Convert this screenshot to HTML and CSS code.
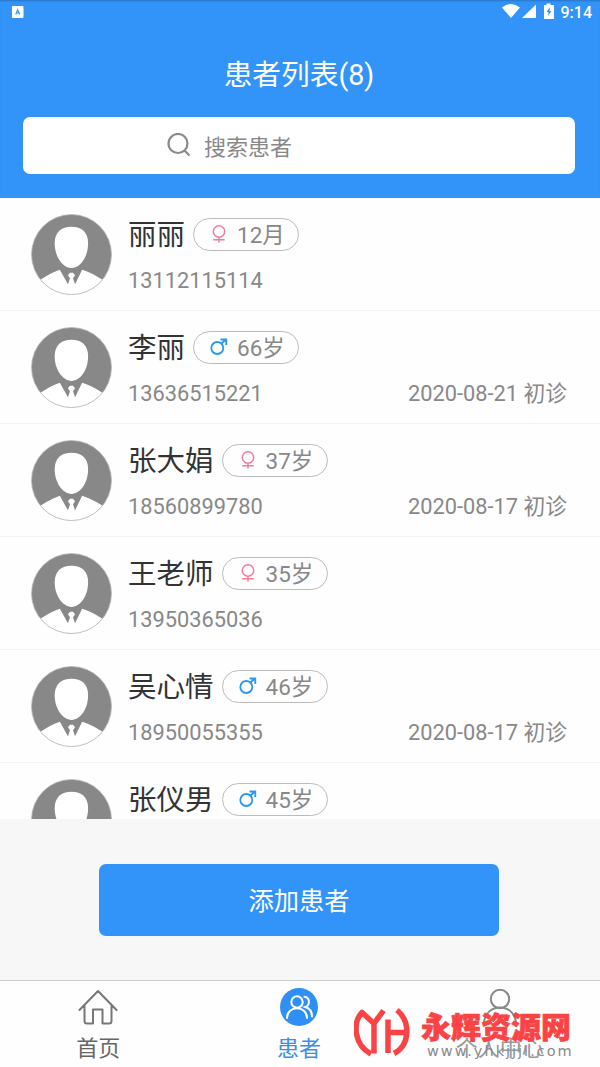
FILE: index.html
```
<!DOCTYPE html>
<html lang="zh-CN">
	<head>
		<title>患者列表</title>
		<meta charset="utf-8">
		<link rel="stylesheet" href="styles.css">
	</head>

	<body>

	<!-- shared icons -->
	<svg class="symbols">
		<symbol id="avatar" viewBox="0 0 80 80">
			<clipPath id="round"><circle cx="40" cy="40" r="39.5"/></clipPath>
			<circle cx="40" cy="40" r="39.5" fill="#888"/>
			<g clip-path="url(#round)" fill="#fff">
				<path d="M40 12.700C50 12.700 56.400 18 56.400 29C56.400 42 49 53.300 40 53.300S23.400 42 23.400 29C23.400 18 30 12.700 40 12.700Z"/>
				<path d="M0 80V73C8 64.500 18 59 28.500 55L36.500 69.500L38.500 63.500L36.500 60.500L38.500 58H41.500L43.500 60.500L41.500 63.500L43.500 69.500L50.500 55C62 59 72 64.500 80 73V80Z"/>
			</g>
			<circle cx="40" cy="40" r="39.5" fill="none" stroke="#bbb" stroke-width=".8"/>
		</symbol>
		<symbol id="female" viewBox="0 0 20 20">
			<g fill="none" stroke="#f47c9a" stroke-width="1.5">
				<circle cx="10" cy="7.500" r="5.700"/>
				<path d="M10 13v5.500M4.300 15.700h11.400"/>
			</g>
		</symbol>
		<symbol id="male" viewBox="0 0 20 20">
			<g fill="none" stroke="#2b98f0" stroke-width="1.800">
				<circle cx="8.300" cy="11" r="6"/>
				<path d="M12.500 6.500L17 2.500M11.500 2.500h5.800v5.500"/>
			</g>
		</symbol>
	</svg>

	<header>
		<div class="status">
			<svg class="status-app" width="12" height="12" viewBox="0 0 12 12">
				<rect width="11.500" height="12" rx="1" fill="#fff"/>
				<path d="M3.700 8.500L5.700 3.700L7.700 8.500M4.400 7h2.600" fill="none" stroke="#3294f8" stroke-width="1.100"/>
			</svg>
			<svg class="status-icons" width="54" height="16" viewBox="0 0 54 16" fill="#fff">
				<path d="M0 4.500Q9 -2.500 18 4.500L9 15Z"/>
				<path d="M34 1.500V15H20Z"/>
				<path d="M42 2h2.500V.500h4V2H52v14H42Z"/>
				<path d="M48 4L44.500 9h2L46 13L49.500 8h-2Z" fill="#3294f8"/>
			</svg>
			<span>9:14</span>
		</div>
		<h1>患者列表(8)</h1>
		<div class="search">
			<svg width="24" height="24" viewBox="0 0 24 24" fill="none" stroke="#8a8a8a" stroke-width="2.200">
				<circle cx="11" cy="10.500" r="9.500"/>
				<path d="M17.500 17.500L22.500 22.500"/>
			</svg>
			<span>搜索患者</span>
		</div>
	</header>

	<ul class="list">
		<li>
			<svg class="avatar"><use href="#avatar"/></svg>
			<div class="info">
				<div class="line"><b>丽丽</b><span class="pill"><svg><use href="#female"/></svg>12月</span></div>
				<div class="detail"><span>13112115114</span></div>
			</div>
		</li>
		<li>
			<svg class="avatar"><use href="#avatar"/></svg>
			<div class="info">
				<div class="line"><b>李丽</b><span class="pill"><svg><use href="#male"/></svg>66岁</span></div>
				<div class="detail"><span>13636515221</span><span>2020-08-21 初诊</span></div>
			</div>
		</li>
		<li>
			<svg class="avatar"><use href="#avatar"/></svg>
			<div class="info">
				<div class="line"><b>张大娟</b><span class="pill"><svg><use href="#female"/></svg>37岁</span></div>
				<div class="detail"><span>18560899780</span><span>2020-08-17 初诊</span></div>
			</div>
		</li>
		<li>
			<svg class="avatar"><use href="#avatar"/></svg>
			<div class="info">
				<div class="line"><b>王老师</b><span class="pill"><svg><use href="#female"/></svg>35岁</span></div>
				<div class="detail"><span>13950365036</span></div>
			</div>
		</li>
		<li>
			<svg class="avatar"><use href="#avatar"/></svg>
			<div class="info">
				<div class="line"><b>吴心情</b><span class="pill"><svg><use href="#male"/></svg>46岁</span></div>
				<div class="detail"><span>18950055355</span><span>2020-08-17 初诊</span></div>
			</div>
		</li>
		<li>
			<svg class="avatar"><use href="#avatar"/></svg>
			<div class="info">
				<div class="line"><b>张仪男</b><span class="pill"><svg><use href="#male"/></svg>45岁</span></div>
			</div>
		</li>
	</ul>

	<div class="add">
		<button type="button">添加患者</button>
	</div>

	<nav>
		<a>
			<svg width="40" height="40" viewBox="0 0 40 40" fill="none" stroke="#777" stroke-width="2" stroke-linecap="round" stroke-linejoin="round">
				<path d="M1.500 23L20 4L38.500 23M6.500 19V34q0 2.500 2.500 2.500h6V22.500h9.500v14h6.500q2.500 0 2.500-2.500V19"/>
			</svg>
			<span>首页</span>
		</a>
		<a class="active">
			<svg width="40" height="40" viewBox="0 0 40 40" fill="none" stroke="#fff" stroke-width="2" stroke-linecap="round">
				<circle cx="20" cy="20" r="19" fill="#2e90f5" stroke="none"/>
				<circle cx="18" cy="15" r="5.700"/>
				<path d="M8 31C8 18 28 18 28 31M25.500 9.800c5.500 .700 6 8.200 .800 10.200c4 1.200 6.700 4.500 6.700 9.500"/>
			</svg>
			<span>患者</span>
		</a>
		<a class="mine">
			<svg width="40" height="40" viewBox="0 0 40 40" fill="none" stroke="#888" stroke-width="2" stroke-linecap="round">
				<circle cx="20" cy="12" r="9.200"/>
				<path d="M4 37C4 15 36 15 36 37"/>
			</svg>
			<span>个人中心</span>
		</a>
	</nav>

	<div class="site">
		<svg width="56" height="50" viewBox="0 0 56 50" fill="none" stroke="#fa4345" stroke-width="5.500" stroke-linejoin="round">
			<path d="M17 47C-1 37 -1 15 8 5.500L20 16.500L29.500 3.500M20 16V46.500"/>
			<path d="M34 12.500V46M34 25.500H52M43 3C57 15 56 38 40 46.500"/>
		</svg>
		<div class="site-text">
			<strong>永辉资源网</strong>
			<small>www.yhkjjjl.com</small>
		</div>
	</div>

	</body>
</html>
```
FILE: styles.css
```
* {
	box-sizing: border-box;
}

body {
	margin: 0;
	width: 600px;
	height: 1067px;
	display: flex;
	flex-direction: column;
	position: relative;
	overflow: hidden;
	background-color: #fefefe;
	font-family: Roboto, 'Noto Sans CJK SC', sans-serif;
	color: #888;
}

.symbols {
	position: absolute;
	width: 0;
	height: 0;
}

header {
	height: 198px;
	padding: 0 25px 0 23px;
	background-color: #3294f8;
	box-shadow: inset 0 2px 2px -1px #2873c4;
	color: white;
}

/*Status bar*/
.status {
	height: 24px;
	margin: 0 -17px 0 -11px;
	display: flex;
	align-items: center;
	font-size: 16px;
	font-weight: 500;
}

.status-icons {
	margin: -2px 5px 0 auto;
}

h1 {
	height: 40px;
	margin: 31px 0 22px;
	line-height: 40px;
	text-align: center;
	font-size: 28.7px;
	font-weight: normal;
}

.search {
	height: 57px;
	padding: 0 0 2px 144px;
	display: flex;
	align-items: center;
	gap: 13px;
	background-color: white;
	border-radius: 7px;
	color: #888;
	font-size: 22px;
}

/*Patients*/
.list {
	height: 621px;
	margin: 0;
	padding: 0;
	overflow: hidden;
	list-style: none;
}

.list li {
	height: 113px;
	padding: 16px 33px 0 31px;
	display: flex;
	gap: 17px;
	border-bottom: 1px solid #f3f3f3;
}

.avatar {
	width: 81px;
	height: 81px;
	flex: none;
}

.info {
	flex: 1;
	margin-left: -1px;
	padding-top: 3px;
}

.line {
	height: 34px;
	display: flex;
	align-items: center;
	gap: 8px;
}

.line b {
	padding-top: 4px;
	color: #333;
	font-size: 28.5px;
	font-weight: normal;
	line-height: 34px;
}

.pill {
	width: 106px;
	height: 33px;
	padding: 2px 0 0 15px;
	display: flex;
	align-items: center;
	gap: 8px;
	border: 1.5px solid #bbb;
	border-radius: 17px;
	font-size: 22.5px;
	line-height: 30px;
}

.pill svg {
	width: 20px;
	height: 20px;
	margin-top: -2px;
}

.detail {
	margin-top: 15px;
	display: flex;
	justify-content: space-between;
	font-size: 21.8px;
	line-height: 30px;
}

/*Add button*/
.add {
	height: 161px;
	padding: 45px 101px 0 99px;
	background-color: #f7f7f7;
}

.add button {
	width: 100%;
	height: 72px;
	padding-bottom: 3px;
	border: none;
	border-radius: 7px;
	background-color: #3294f8;
	color: white;
	font-family: inherit;
	font-size: 25.3px;
}

/*Tabs*/
nav {
	height: 87px;
	margin: 0 0 0 -2px;
	display: flex;
	border-top: 1.5px solid #ccc;
}

nav a {
	flex: 1;
	padding-top: 6px;
	display: flex;
	flex-direction: column;
	align-items: center;
	font-size: 22px;
	line-height: 30px;
	color: #666;
}

nav span {
	margin-top: 7px;
}

nav .active {
	color: #3b8fe8;
}

nav .mine {
	color: #999;
}

/*Site mark, lies over the tabs*/
.site {
	position: absolute;
	left: 354px;
	top: 1007px;
	display: flex;
	gap: 11px;
}

.site-text {
	display: flex;
	flex-direction: column;
}

.site strong {
	padding-top: 1px;
	color: #fa4345;
	font-size: 30px;
	font-weight: 900;
	line-height: 40px;
	-webkit-text-stroke: .7px #fa4345;
}

.site small {
	margin: -6px 0 0 6px;
	font-family: 'DejaVu Sans', sans-serif;
	font-size: 14.5px;
	letter-spacing: 2px;
	line-height: 18px;
}
```
